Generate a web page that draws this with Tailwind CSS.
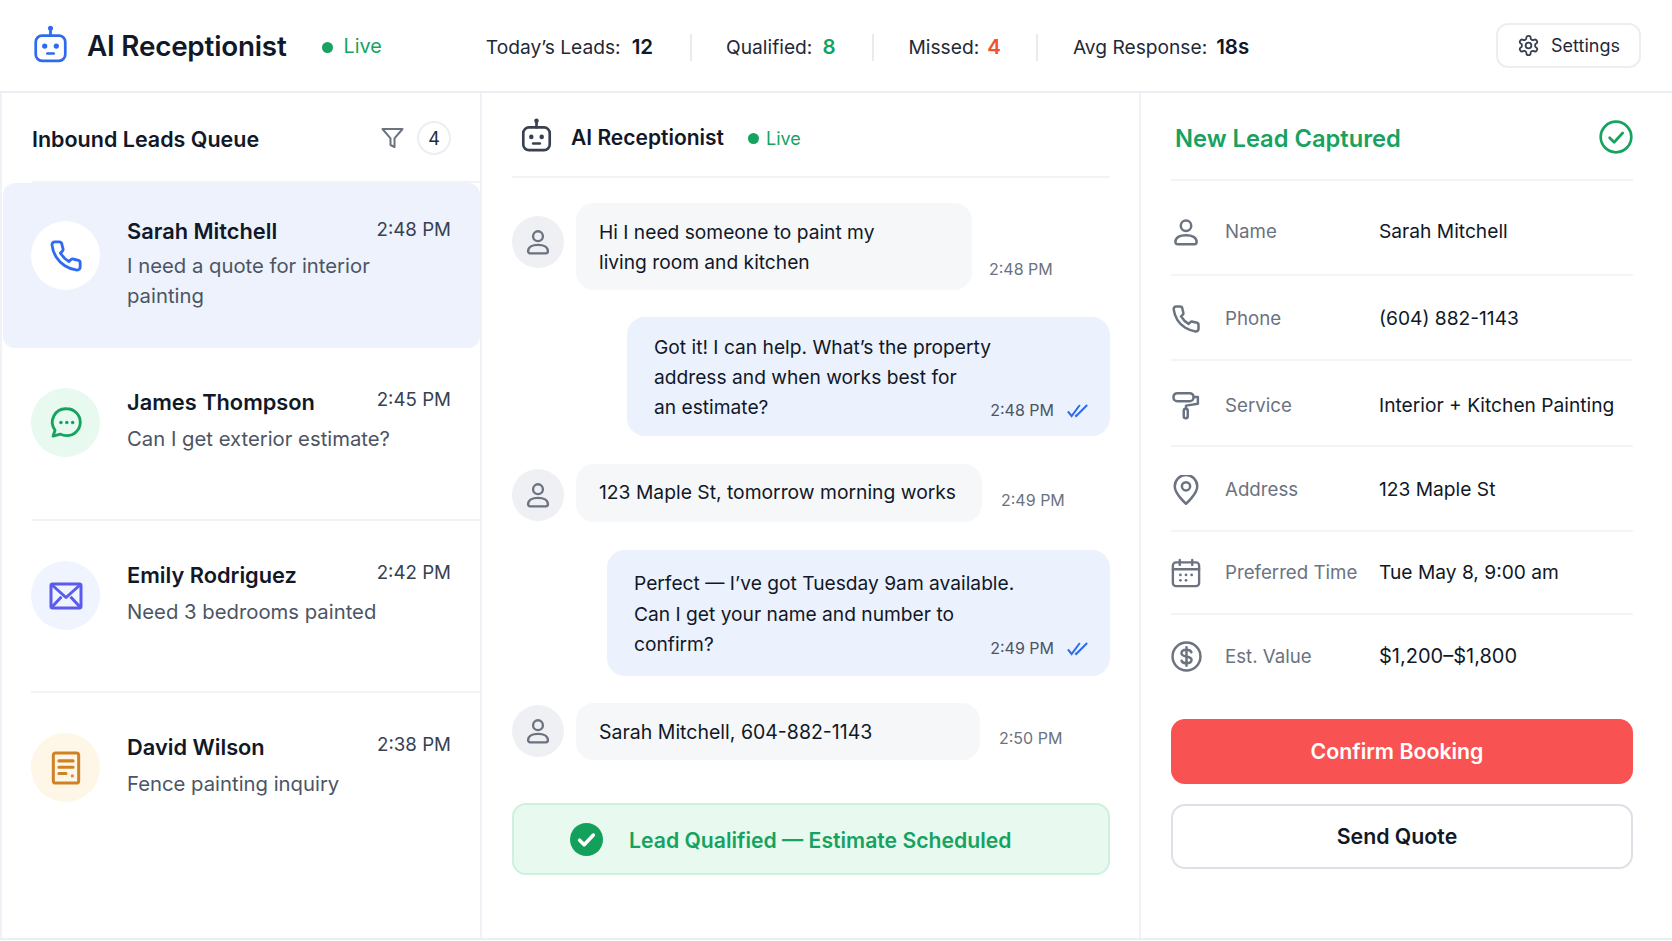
<!DOCTYPE html>
<html lang="en">
<head>
  <meta charset="UTF-8" />
  <title>AI Receptionist</title>
  <script src="https://cdn.jsdelivr.net/npm/@tailwindcss/browser@4"></script>
</head>
<body class="bg-white text-[#111827] font-[Inter,'Noto_Sans',sans-serif] w-[1672px] h-[941px] overflow-hidden">
  <svg class="hidden">
    <symbol id="person" viewBox="0 0 24 24"><circle cx="12" cy="7" r="4.2"/><path d="M3.5 20c0-3.5 3.500-5.500 8.500-5.500s8.500 2 8.500 5.500a1.700 1.700 0 0 1-1.700 1.700H5.200A1.700 1.700 0 0 1 3.500 20z"/></symbol>
    <symbol id="phone" viewBox="0 0 24 24"><path d="M22 16.92v3a2 2 0 0 1-2.18 2 19.79 19.79 0 0 1-8.63-3.07 19.5 19.5 0 0 1-6-6 19.79 19.79 0 0 1-3.07-8.67A2 2 0 0 1 4.11 2h3a2 2 0 0 1 2 1.72 12.84 12.84 0 0 0 .7 2.81 2 2 0 0 1-.45 2.11L8.09 9.91a16 16 0 0 0 6 6l1.27-1.27a2 2 0 0 1 2.11-.45 12.84 12.84 0 0 0 2.81.7A2 2 0 0 1 22 16.92z"/></symbol>
    <symbol id="ticks" viewBox="0 0 24 16"><path d="M1 9l4 5L14 2M9 13l1 1L22 2"/></symbol>
  </svg>

  <!-- top bar -->
  <header class="h-[93px] pt-[3px] border-b-2 border-[#eceef4] flex items-center pl-[33px] pr-[31px]">
    <svg class="-mt-[6px] w-[35px] h-[38px] text-[#2f6bf0]" viewBox="0 0 32 36" fill="none" stroke="currentColor" stroke-width="2.600" stroke-linecap="round">
      <circle cx="16" cy="3" r="2.400" fill="currentColor" stroke="none"/>
      <path d="M16 4v6"/>
      <rect x="2" y="10" width="28" height="24" rx="6"/>
      <circle cx="10.500" cy="20" r="2.500" fill="currentColor" stroke="none"/>
      <circle cx="21.500" cy="20" r="2.500" fill="currentColor" stroke="none"/>
      <path d="M13 27h6"/>
    </svg>
    <span class="ml-[19px] text-[27.800px] leading-none font-semibold tracking-[-0.2px]">AI Receptionist</span>
    <span class="ml-[35px] w-[11px] h-[11px] rounded-full bg-[#16a35f]"></span>
    <span class="ml-[11px] text-[19.800px] text-[#16a35f]">Live</span>

    <div class="ml-[104px] flex items-center text-[19.200px] text-[#1f2937]">
      <span>Today’s Leads:</span><b class="ml-[11px] text-[20.500px] font-semibold text-[#111827]">12</b>
      <span class="w-[2px] h-[27px] bg-[#e9ebf0] ml-[37px] mr-[34px]"></span>
      <span>Qualified:</span><b class="ml-[10px] text-[20.500px] font-semibold text-[#16a35f]">8</b>
      <span class="w-[2px] h-[27px] bg-[#e9ebf0] ml-[36px] mr-[35px]"></span>
      <span>Missed:</span><b class="ml-[8px] text-[20.500px] font-semibold text-[#f0532d]">4</b>
      <span class="w-[2px] h-[27px] bg-[#e9ebf0] ml-[35px] mr-[35px]"></span>
      <span>Avg Response:</span><b class="ml-[9px] text-[20.500px] font-semibold text-[#111827]">18s</b>
    </div>

    <div class="ml-auto -mt-[3px] w-[145px] h-[45px] rounded-[12px] border-2 border-[#eceef4] flex items-center justify-center gap-[11px] text-[18px] text-[#1f2937]">
      <svg class="w-[23px] h-[23px] text-[#374151]" viewBox="0 0 24 24" fill="none" stroke="currentColor" stroke-width="1.900" stroke-linejoin="round"><path d="M12.22 2h-.44a2 2 0 0 0-2 2v.18a2 2 0 0 1-1 1.73l-.43.25a2 2 0 0 1-2 0l-.15-.08a2 2 0 0 0-2.73.73l-.22.38a2 2 0 0 0 .73 2.73l.15.1a2 2 0 0 1 1 1.72v.51a2 2 0 0 1-1 1.74l-.15.09a2 2 0 0 0-.73 2.73l.22.38a2 2 0 0 0 2.73.73l.15-.08a2 2 0 0 1 2 0l.43.25a2 2 0 0 1 1 1.73V20a2 2 0 0 0 2 2h.44a2 2 0 0 0 2-2v-.18a2 2 0 0 1 1-1.73l.43-.25a2 2 0 0 1 2 0l.15.08a2 2 0 0 0 2.73-.73l.22-.39a2 2 0 0 0-.73-2.73l-.15-.08a2 2 0 0 1-1-1.74v-.5a2 2 0 0 1 1-1.74l.15-.09a2 2 0 0 0 .73-2.73l-.22-.38a2 2 0 0 0-2.73-.73l-.15.08a2 2 0 0 1-2 0l-.43-.25a2 2 0 0 1-1-1.73V4a2 2 0 0 0-2-2z"/><circle cx="12" cy="12" r="3"/></svg>
      Settings
    </div>
  </header>

  <div class="grid grid-cols-[480px_659px_533px] h-[847px] border-b-2 border-[#eceef4]">

    <!-- leads queue -->
    <section class="border-l-2 border-[#f0f2f7]">
      <div class="h-[90px] ml-[30px] border-b-2 border-[#f1f3f7] flex items-center pr-[29px]">
        <h2 class="mt-[4px] text-[21.500px] font-semibold">Inbound Leads Queue</h2>
        <svg class="ml-auto mt-[2px] w-[25px] h-[24px] text-[#6b7280]" viewBox="0 0 24 24" fill="none" stroke="currentColor" stroke-width="2" stroke-linejoin="round"><polygon points="22 3 2 3 10 12.46 10 19 14 21 14 12.46 22 3"/></svg>
        <span class="ml-[12px] mt-[2px] w-[34px] h-[34px] rounded-full border-2 border-[#eceef4] flex items-center justify-center text-[18px] text-[#1f2937]">4</span>
      </div>

      <div class="h-[165px] ml-[1px] rounded-xl bg-[#edf2fd] flex pl-[28px] pr-[29px] pt-[34px]">
        <div class="w-[69px] h-[69px] mt-[4px] shrink-0 rounded-full bg-white flex items-center justify-center">
          <svg class="w-[34px] h-[34px] text-[#2f6bf0] fill-none stroke-current stroke-[2]"><use href="#phone"/></svg>
        </div>
        <div class="ml-[27px] flex-1">
          <div class="flex justify-between h-[28px]">
            <span class="text-[21.800px] leading-[28px] font-semibold">Sarah Mitchell</span>
            <span class="text-[18.700px] leading-[28px] -mt-[1px] text-[#374151]">2:48 PM</span>
          </div>
          <p class="mt-[6px] text-[20.300px] leading-[30px] text-[#4b5563] w-[260px]">I need a quote for interior painting</p>
        </div>
      </div>

      <div class="h-[173px] ml-[29px] border-b-2 border-[#f1f3f7] flex pr-[29px] pt-[40px]">
        <div class="w-[69px] h-[69px] shrink-0 rounded-full bg-[#e8f9ef] flex items-center justify-center">
          <svg class="w-[38px] h-[38px] text-[#16a35f]" viewBox="0 0 24 24" fill="none" stroke="currentColor" stroke-width="1.800" stroke-linejoin="round"><path d="M12.500 3a8.500 8.500 0 0 1 0 17c-1.500 0-2.900-.3-4-1l-4.700 1.300 1.300-3.700A8.500 8.500 0 0 1 12.500 3z"/><circle cx="8.800" cy="11.700" r="1.100" fill="currentColor" stroke="none"/><circle cx="12.500" cy="11.700" r="1.100" fill="currentColor" stroke="none"/><circle cx="16.200" cy="11.700" r="1.100" fill="currentColor" stroke="none"/></svg>
        </div>
        <div class="ml-[27px] flex-1">
          <div class="flex justify-between h-[28px]">
            <span class="text-[21.800px] leading-[28px] font-semibold">James Thompson</span>
            <span class="text-[18.700px] leading-[28px] -mt-[2px] text-[#374151]">2:45 PM</span>
          </div>
          <p class="mt-[8px] text-[20.300px] leading-[30px] text-[#4b5563]">Can I get exterior estimate?</p>
        </div>
      </div>

      <div class="h-[172px] ml-[29px] border-b-2 border-[#f1f3f7] flex pr-[29px] pt-[40px]">
        <div class="w-[69px] h-[69px] shrink-0 rounded-full bg-[#f0f4fe] flex items-center justify-center">
          <svg class="w-[36px] h-[30px] text-[#5b5bee]" viewBox="0 0 24 20" fill="none" stroke="currentColor" stroke-width="2" stroke-linejoin="round"><rect x="2" y="2" width="20" height="16" rx="1"/><path d="M2.500 2.500L12 11l9.500-8.500M2.500 17.500L9 10.500M21.500 17.500L15 10.500"/></svg>
        </div>
        <div class="ml-[27px] flex-1">
          <div class="flex justify-between h-[28px]">
            <span class="text-[21.800px] leading-[28px] font-semibold">Emily Rodriguez</span>
            <span class="text-[18.700px] leading-[28px] -mt-[2px] text-[#374151]">2:42 PM</span>
          </div>
          <p class="mt-[8px] text-[20.300px] leading-[30px] text-[#4b5563]">Need 3 bedrooms painted</p>
        </div>
      </div>

      <div class="ml-[29px] flex pr-[29px] pt-[40px]">
        <div class="w-[69px] h-[69px] shrink-0 rounded-full bg-[#fef6e7] flex items-center justify-center">
          <svg class="w-[38px] h-[38px] text-[#d08125]" viewBox="0 0 24 24" fill="none" stroke="currentColor" stroke-width="1.900" stroke-linejoin="round" stroke-linecap="round"><rect x="4" y="2.500" width="16" height="19" rx="1.500"/><path d="M7.500 7.500h9M7.500 11.500h9M7.500 15.500h4.500"/><circle cx="16" cy="17" r="1" fill="#ef7d4f" stroke="none"/></svg>
        </div>
        <div class="ml-[27px] flex-1">
          <div class="flex justify-between h-[28px]">
            <span class="text-[21.800px] leading-[28px] font-semibold">David Wilson</span>
            <span class="text-[18.700px] leading-[28px] -mt-[2px] text-[#374151]">2:38 PM</span>
          </div>
          <p class="mt-[8px] text-[20.300px] leading-[30px] text-[#4b5563]">Fence painting inquiry</p>
        </div>
      </div>
    </section>

    <!-- conversation -->
    <section class="border-l-2 border-[#f0f2f7] pl-[30px] pr-[29px]">
      <div class="h-[85px] border-b-2 border-[#f1f3f7] flex items-center pl-[9px]">
        <svg class="w-[31px] h-[34px] text-[#374151]" viewBox="0 0 32 36" fill="none" stroke="currentColor" stroke-width="2.800" stroke-linecap="round">
          <circle cx="16" cy="3" r="2.400" fill="currentColor" stroke="none"/>
          <path d="M16 4v6"/>
          <rect x="2" y="10" width="28" height="24" rx="6"/>
          <circle cx="10.500" cy="20" r="2.400" fill="currentColor" stroke="none"/>
          <circle cx="21.500" cy="20" r="2.400" fill="currentColor" stroke="none"/>
          <path d="M12.500 27h7"/>
        </svg>
        <span class="ml-[19px] mt-[7px] text-[21px] font-semibold">AI Receptionist</span>
        <span class="ml-[24px] mt-[7px] w-[11px] h-[11px] rounded-full bg-[#16a35f]"></span>
        <span class="ml-[7px] mt-[7px] text-[18px] text-[#16a35f]">Live</span>
      </div>

      <div class="mt-[25px] flex">
        <div class="w-[52px] h-[52px] mt-[13px] rounded-full bg-[#eff0f3] flex items-center justify-center"><svg class="w-[28px] h-[28px] text-[#6b7280] fill-none stroke-current stroke-[2]"><use href="#person"/></svg></div>
        <div class="ml-[12px] w-[396px] h-[87px] rounded-[18px] bg-[#f6f7f9] pl-[23px] pt-[14px] text-[19.200px] leading-[30px]">Hi I need someone to paint my<br>living room and kitchen</div>
        <span class="self-end ml-[17px] mb-[9px] text-[16px] leading-[24px] text-[#6b7280]">2:48 PM</span>
      </div>

      <div class="mt-[27px] ml-auto w-[483px] h-[119px] rounded-[18px] bg-[#ebf1fd] pl-[27px] pr-[21px] pt-[15px] text-[19.200px] leading-[30px]">
        Got it! I can help. What’s the property<br>address and when works best for
        <div class="flex justify-between">
          <span>an estimate?</span>
          <span class="flex items-center pt-[3px] text-[16px] text-[#4b5563]">2:48 PM<svg class="ml-[13px] w-[22px] h-[15px] text-[#2f6bf0] fill-none stroke-current stroke-[2.200]"><use href="#ticks"/></svg></span>
        </div>
      </div>

      <div class="mt-[28px] flex">
        <div class="w-[52px] h-[52px] mt-[5px] rounded-full bg-[#eff0f3] flex items-center justify-center"><svg class="w-[28px] h-[28px] text-[#6b7280] fill-none stroke-current stroke-[2]"><use href="#person"/></svg></div>
        <div class="ml-[12px] w-[406px] h-[58px] rounded-[18px] bg-[#f6f7f9] pl-[23px] pt-[13px] text-[19.300px] leading-[30px]">123 Maple St, tomorrow morning works</div>
        <span class="self-end ml-[19px] mb-[10px] text-[16px] leading-[24px] text-[#6b7280]">2:49 PM</span>
      </div>

      <div class="mt-[28px] ml-auto w-[503px] h-[126px] rounded-[18px] bg-[#ebf1fd] pl-[27px] pr-[21px] pt-[18px] text-[19.200px] leading-[30.500px]">
        Perfect — I’ve got Tuesday 9am available.<br>Can I get your name and number to
        <div class="flex justify-between">
          <span>confirm?</span>
          <span class="flex items-center pt-[4px] text-[16px] text-[#4b5563]">2:49 PM<svg class="ml-[13px] w-[22px] h-[15px] text-[#2f6bf0] fill-none stroke-current stroke-[2.200]"><use href="#ticks"/></svg></span>
        </div>
      </div>

      <div class="mt-[27px] flex">
        <div class="w-[52px] h-[52px] mt-[2px] rounded-full bg-[#eff0f3] flex items-center justify-center"><svg class="w-[28px] h-[28px] text-[#6b7280] fill-none stroke-current stroke-[2]"><use href="#person"/></svg></div>
        <div class="ml-[12px] w-[404px] h-[57px] rounded-[18px] bg-[#f6f7f9] pl-[23px] pt-[14px] text-[19.500px] leading-[30px]">Sarah Mitchell, 604-882-1143</div>
        <span class="self-end ml-[19px] mb-[10px] text-[16px] leading-[24px] text-[#6b7280]">2:50 PM</span>
      </div>

      <div class="mt-[43px] h-[72px] rounded-[14px] bg-[#e8faf0] border-2 border-[#cdf1dd] flex items-center pl-[56px] text-[21.200px] font-semibold text-[#16a35f]">
        <svg class="w-[33px] h-[33px]" viewBox="0 0 24 24"><circle cx="12" cy="12" r="12" fill="#12a05a"/><path d="M7 12.500l3.300 3.300L17 8.800" fill="none" stroke="#fff" stroke-width="2.600" stroke-linecap="round" stroke-linejoin="round"/></svg>
        <span class="ml-[26px] mt-[3px]">Lead Qualified — Estimate Scheduled</span>
      </div>
    </section>

    <!-- captured lead -->
    <section class="border-l-2 border-[#f0f2f7] pl-[30px] pr-[39px]">
      <div class="h-[88px] border-b-2 border-[#f1f3f7] flex items-center pl-[4px]">
        <h2 class="mt-[5px] text-[23.700px] font-semibold text-[#16a35f]">New Lead Captured</h2>
        <svg class="ml-auto mt-[2px] w-[34px] h-[34px] text-[#16a35f]" viewBox="0 0 24 24" fill="none" stroke="currentColor" stroke-width="1.900" stroke-linecap="round" stroke-linejoin="round"><circle cx="12" cy="12" r="10.800"/><path d="M7.500 12.500l3.200 3.200 6-6.500"/></svg>
      </div>

      <dl class="text-[19.200px]">
        <div class="h-[95px] pt-[8px] border-b-2 border-[#f3f4f8] flex items-center">
          <svg class="w-[30px] h-[30px] text-[#6b7280] fill-none stroke-current stroke-[2]"><use href="#person"/></svg>
          <dt class="ml-[24px] mt-[2px] w-[154px] text-[18.700px] text-[#6b7280]">Name</dt><dd>Sarah Mitchell</dd>
        </div>
        <div class="h-[85px] pt-[2px] border-b-2 border-[#f3f4f8] flex items-center">
          <svg class="w-[30px] h-[30px] text-[#6b7280] fill-none stroke-current stroke-[2]"><use href="#phone"/></svg>
          <dt class="ml-[24px] mt-[2px] w-[154px] text-[18.700px] text-[#6b7280]">Phone</dt><dd>(604) 882-1143</dd>
        </div>
        <div class="h-[86px] pt-[4px] border-b-2 border-[#f3f4f8] flex items-center">
          <svg class="w-[30px] h-[30px] text-[#6b7280]" viewBox="0 0 24 24" fill="none" stroke="currentColor" stroke-width="2" stroke-linejoin="round"><rect x="2" y="2.500" width="16" height="6.500" rx="3"/><path d="M18 5.500h3.500v5.500l-9.500 1.500v2.500"/><rect x="10.200" y="15" width="3.200" height="7.500" rx="1.600"/></svg>
          <dt class="ml-[24px] mt-[2px] w-[154px] text-[18.700px] text-[#6b7280]">Service</dt><dd>Interior + Kitchen Painting</dd>
        </div>
        <div class="h-[85px] pt-[2px] border-b-2 border-[#f3f4f8] flex items-center">
          <svg class="w-[30px] h-[30px] text-[#6b7280]" viewBox="0 0 24 24" fill="none" stroke="currentColor" stroke-width="2" stroke-linejoin="round"><path d="M12 23s-9-7.800-9-14a9 9 0 0 1 18 0c0 6.200-9 14-9 14z"/><circle cx="12" cy="9" r="3.300"/></svg>
          <dt class="ml-[24px] mt-[2px] w-[154px] text-[18.700px] text-[#6b7280]">Address</dt><dd>123 Maple St</dd>
        </div>
        <div class="h-[83px] border-b-2 border-[#f3f4f8] flex items-center">
          <svg class="w-[30px] h-[30px] text-[#6b7280]" viewBox="0 0 24 24" fill="none" stroke="currentColor" stroke-width="1.900" stroke-linecap="round"><rect x="1.500" y="3.500" width="21" height="19" rx="2.500"/><path d="M1.500 9h21M7 1.500v4M17 1.500v4"/><g fill="currentColor" stroke="none"><circle cx="7.500" cy="13.500" r="1.100"/><circle cx="12" cy="13.500" r="1.100"/><circle cx="16.500" cy="13.500" r="1.100"/><circle cx="7.500" cy="17.800" r="1.100"/><circle cx="12" cy="17.800" r="1.100"/></g></svg>
          <dt class="ml-[24px] mt-[2px] w-[154px] text-[18.700px] text-[#6b7280]">Preferred Time</dt><dd>Tue May 8, 9:00 am</dd>
        </div>
        <div class="h-[84px] pb-[2px] flex items-center">
          <svg class="w-[31px] h-[31px] text-[#6b7280]" viewBox="0 0 24 24" fill="none" stroke="currentColor" stroke-width="1.900" stroke-linecap="round"><circle cx="12" cy="12" r="10.800"/><path d="M15.800 8.700c-.4-1.200-1.900-2-3.800-2-2.300 0-3.900 1.100-3.900 2.700 0 3.600 7.800 1.600 7.800 5.200 0 1.600-1.600 2.700-3.900 2.700-1.900 0-3.400-.8-3.800-2M12 4.800v14.400"/></svg>
          <dt class="ml-[23px] mt-[2px] w-[154px] text-[18.700px] text-[#6b7280]">Est. Value</dt><dd class="text-[20px]">$1,200–$1,800</dd>
        </div>
      </dl>

      <button class="mt-[20px] w-full h-[65px] pr-[10px] rounded-[14px] bg-[#f95252] text-white text-[21.300px] font-semibold">Confirm Booking</button>
      <button class="mt-[20px] w-full h-[65px] pr-[10px] rounded-[14px] border-2 border-[#dde0e7] bg-white text-[21.300px] font-semibold">Send Quote</button>
    </section>
  </div>
</body>
</html>
